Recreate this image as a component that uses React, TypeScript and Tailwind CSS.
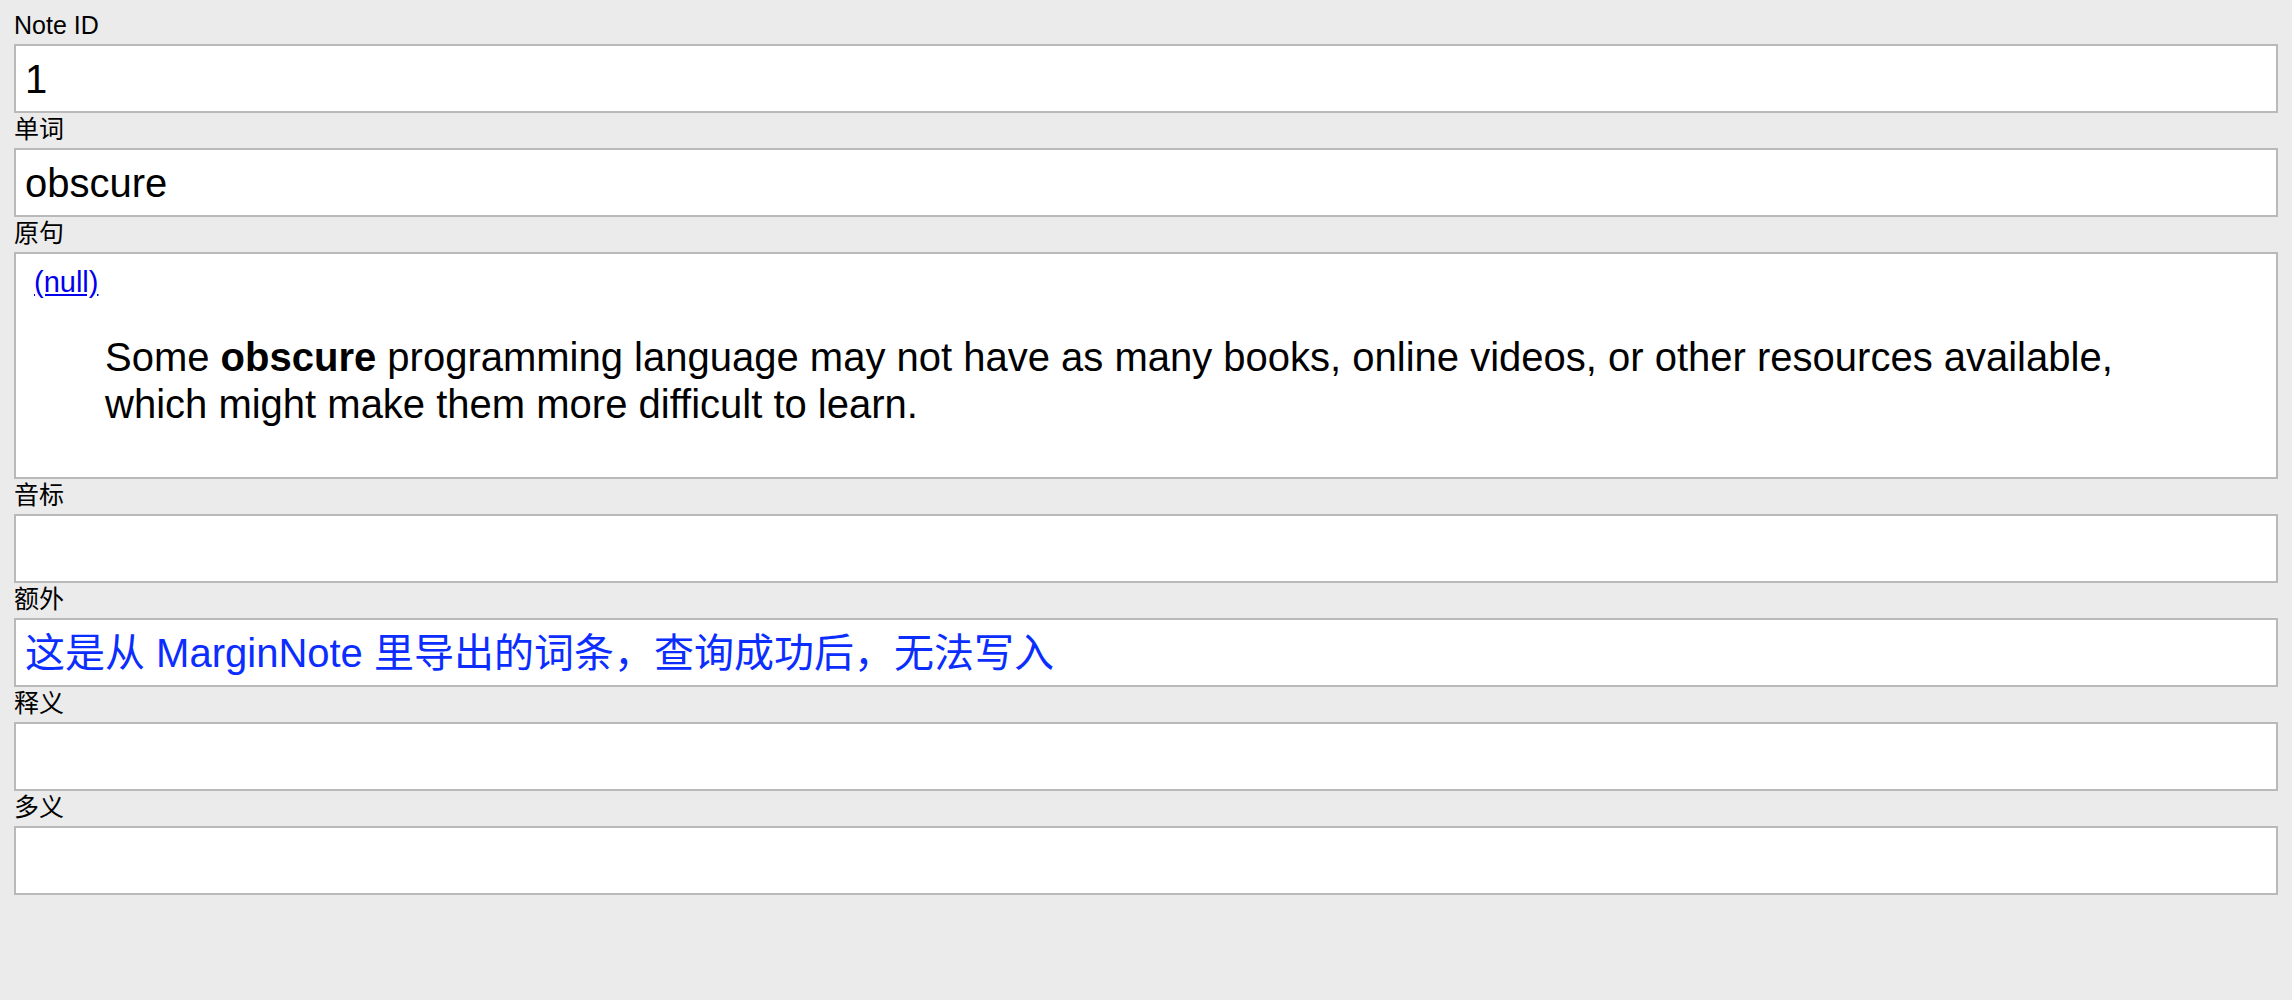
import React from 'react';

const font = '[font-family:"Liberation_Sans","Noto_Sans_CJK_SC",sans-serif]';

function Label({ text }: { text: string }) {
  return (
    <div className="h-[35px] text-[25px] leading-[33px] text-black">{text}</div>
  );
}

function Field({ label, value, blue }: { label: string; value?: string; blue?: boolean }) {
  return (
    <div>
      <Label text={label} />
      <div
        className={`h-[69px] border-2 border-[#b9b9b9] bg-white px-[9px] pt-[10px] text-[40px] leading-[46px] ${
          blue ? 'text-[#0b2eff]' : 'text-black'
        }`}
      >
        {value}
      </div>
    </div>
  );
}

export default function App() {
  return (
    <div className={`min-h-screen bg-[#ebebeb] px-[14px] pt-[9px] ${font}`}>
      <Field label="Note ID" value="1" />
      <Field label="单词" value="obscure" />

      <div>
        <Label text="原句" />
        <div className="h-[227px] border-2 border-[#b9b9b9] bg-white px-[9px] pt-[12px] text-black">
          <a href="#" className="ml-[9px] text-[29px] leading-[32px] text-[#0000ee] underline">
            (null)
          </a>
          <blockquote className="mx-[80px] mt-[35px] text-[40px] leading-[47px]">
            Some <b>obscure</b> programming language may not have as many books, online videos, or other resources available,
            which might make them more difficult to learn.
          </blockquote>
        </div>
      </div>

      <Field label="音标" />
      <Field label="额外" value="这是从 MarginNote 里导出的词条，查询成功后，无法写入" blue />
      <Field label="释义" />
      <Field label="多义" />
    </div>
  );
}
